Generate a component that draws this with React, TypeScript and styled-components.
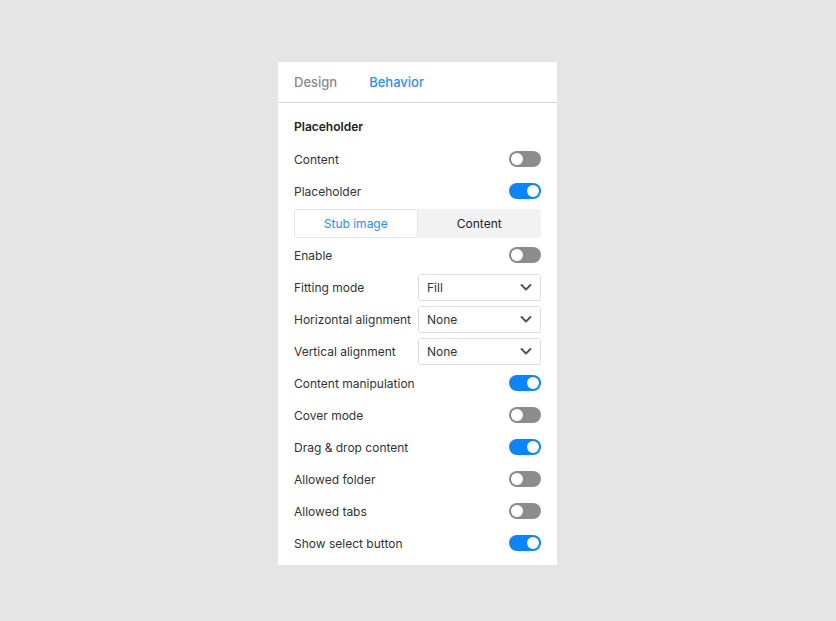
import React from 'react';
import styled, { createGlobalStyle } from 'styled-components';

const GlobalStyle = createGlobalStyle`
  html, body {
    margin: 0;
    padding: 0;
    background: #e5e5e5;
    font-family: Inter, 'Noto Sans', sans-serif;
  }
`

const Page = styled.div`
  display: flex;
  justify-content: center;
  align-items: flex-start;
  padding-top: 62px;
  min-height: 621px;
  box-sizing: border-box;
`

const Panel = styled.div`
  width: 279px;
  background: #fff;
  padding-bottom: 6px;
  margin-left: -1px;
`

const Tabs = styled.div`
  display: flex;
  gap: 32px;
  height: 40px;
  align-items: center;
  padding: 0 16px;
  border-bottom: 1px solid #d6d6d6;
`

const Tab = styled.div<{ active?: boolean }>`
  font-size: 13px;
  font-weight: 500;
  color: ${p => (p.active ? '#2f8cff' : '#8a8a8a')};
`

const Body = styled.div`
  padding: 7px 16px 0;
`

const Heading = styled.div`
  font-size: 12px;
  font-weight: 600;
  color: #222;
  height: 32px;
  margin-bottom: 1px;
  display: flex;
  align-items: center;
`

const Row = styled.div`
  display: flex;
  align-items: center;
  justify-content: space-between;
  height: 32px;
  font-size: 12px;
  color: #333;
`

const Toggle = styled.div<{ on?: boolean }>`
  width: 32px;
  height: 16px;
  border-radius: 8px;
  background: ${p => (p.on ? '#0a84ff' : '#8c8c8c')};
  position: relative;

  &::after {
    content: '';
    position: absolute;
    top: 2px;
    left: ${p => (p.on ? '18px' : '2px')};
    width: 12px;
    height: 12px;
    border-radius: 50%;
    background: #fff;
  }
`

const Segmented = styled.div`
  flex: 1;
  display: grid;
  grid-template-columns: 1fr 1fr;
  height: 29px;
  background: #f2f2f2;
  border-radius: 3px;
  font-size: 12px;
`

const Segment = styled.div<{ active?: boolean }>`
  display: flex;
  align-items: center;
  justify-content: center;
  border-radius: 3px;
  color: ${p => (p.active ? '#2f8cff' : '#222')};
  background: ${p => (p.active ? '#fff' : 'transparent')};
  box-shadow: ${p => (p.active ? '0 0 0 1px #e6e6e6 inset' : 'none')};
`

const Select = styled.div`
  width: 123px;
  height: 27px;
  box-sizing: border-box;
  border: 1px solid #dedede;
  border-radius: 3px;
  display: flex;
  align-items: center;
  justify-content: space-between;
  padding: 0 8px;
  font-size: 12px;
  color: #333;
`

const Chevron = () => (
  <svg width="12" height="12" viewBox="0 0 12 12">
    <path d="M1.5 4 L6 8.5 L10.5 4" fill="none" stroke="#555" strokeWidth="2" strokeLinecap="round" strokeLinejoin="round" />
  </svg>
)

const ToggleRow = ({ label, on }: { label: string; on?: boolean }) => (
  <Row>
    <span>{label}</span>
    <Toggle on={on} />
  </Row>
)

const SelectRow = ({ label, value }: { label: string; value: string }) => (
  <Row>
    <span>{label}</span>
    <Select>
      <span>{value}</span>
      <Chevron />
    </Select>
  </Row>
)

const App = () => {
  return (
    <Page>
      <GlobalStyle />
      <Panel>
        <Tabs>
          <Tab>Design</Tab>
          <Tab active>Behavior</Tab>
        </Tabs>
        <Body>
          <Heading>Placeholder</Heading>
          <ToggleRow label="Content" />
          <ToggleRow label="Placeholder" on />
          <Row>
            <Segmented>
              <Segment active>Stub image</Segment>
              <Segment>Content</Segment>
            </Segmented>
          </Row>
          <ToggleRow label="Enable" />
          <SelectRow label="Fitting mode" value="Fill" />
          <SelectRow label="Horizontal alignment" value="None" />
          <SelectRow label="Vertical alignment" value="None" />
          <ToggleRow label="Content manipulation" on />
          <ToggleRow label="Cover mode" />
          <ToggleRow label="Drag & drop content" on />
          <ToggleRow label="Allowed folder" />
          <ToggleRow label="Allowed tabs" />
          <ToggleRow label="Show select button" on />
        </Body>
      </Panel>
    </Page>
  );
};

export default App;
